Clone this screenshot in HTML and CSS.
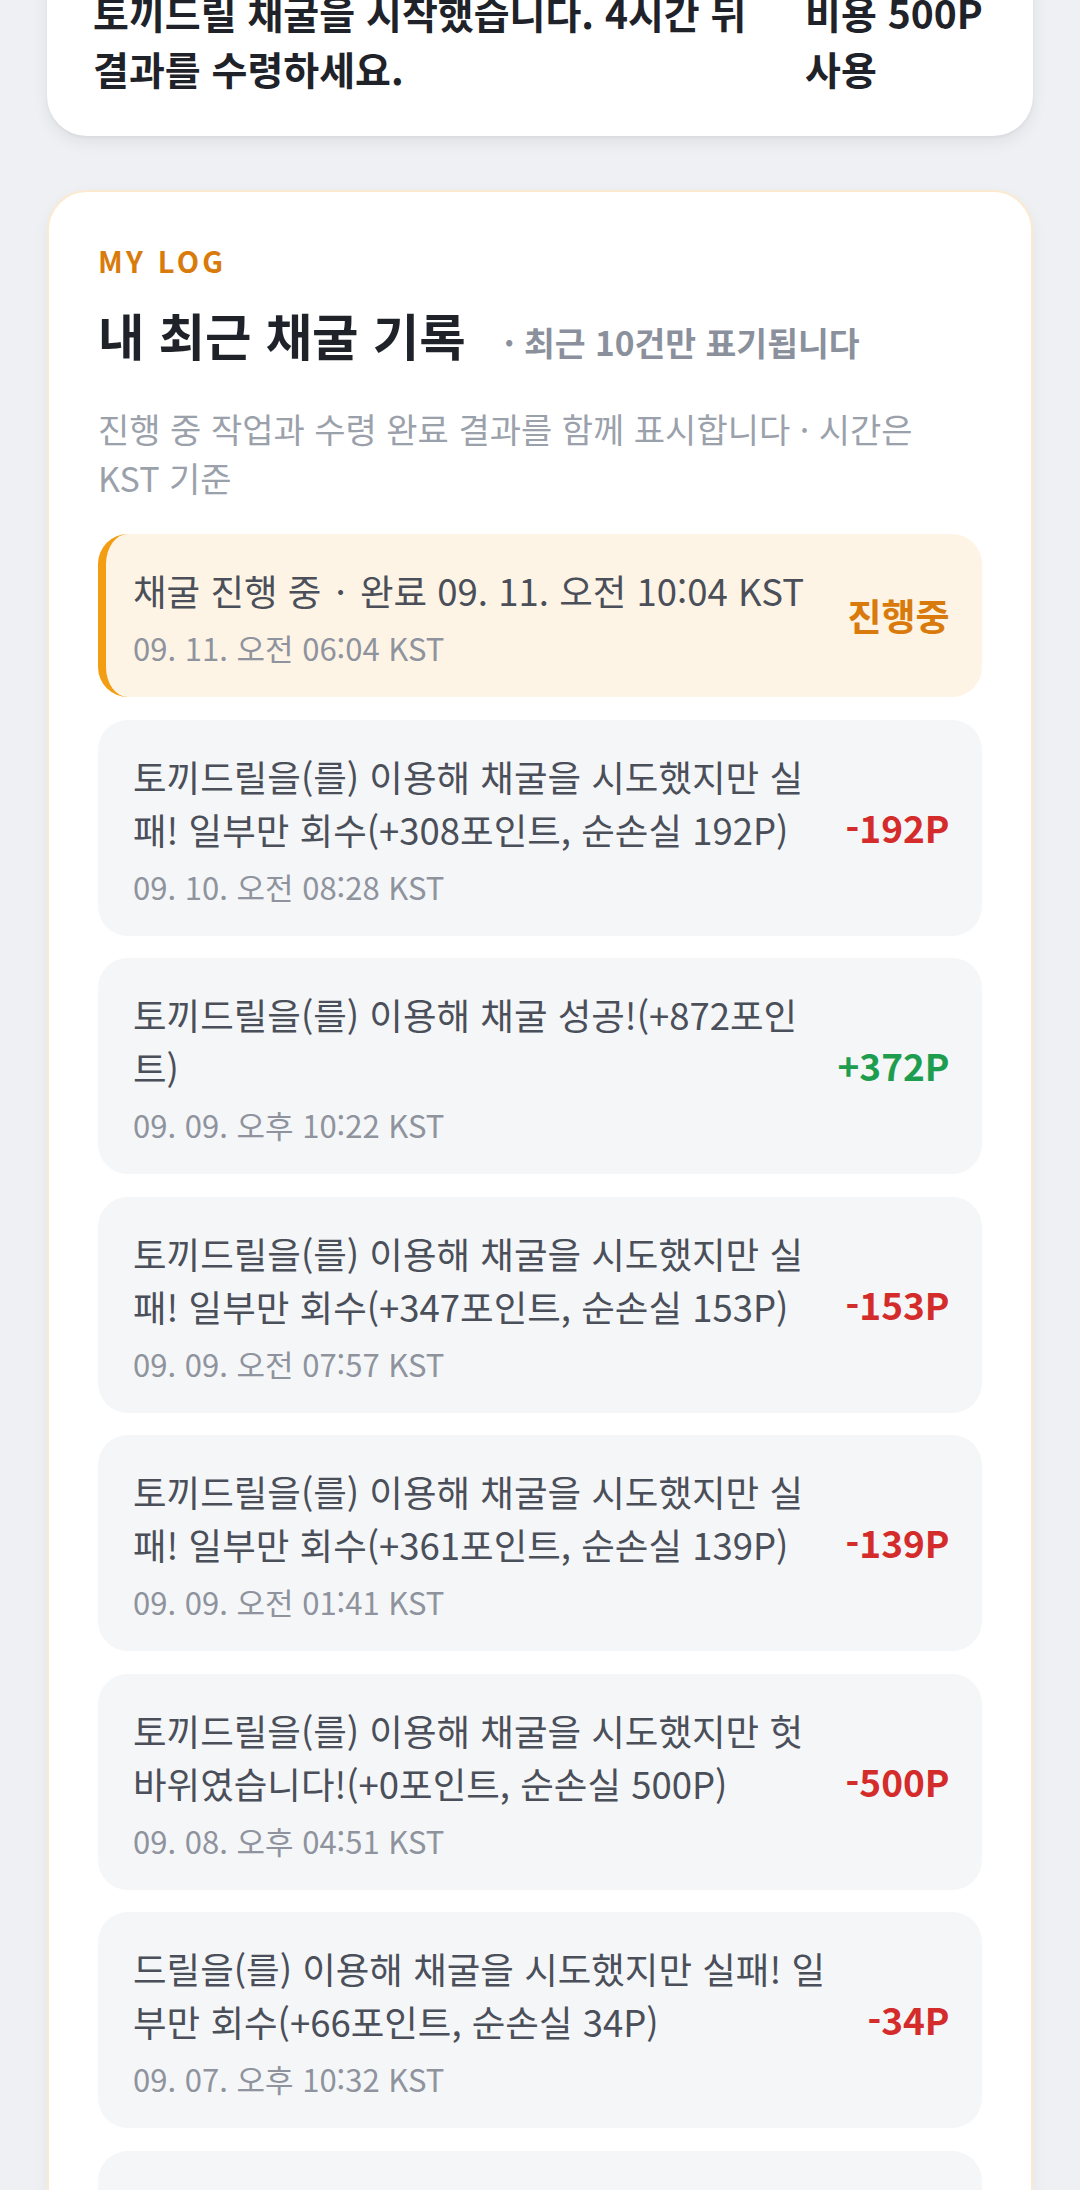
FILE: index.html
```html
<!DOCTYPE html>
<html lang="ko">
<head>
<meta charset="utf-8">
<title>내 최근 채굴 기록</title>
<link rel="stylesheet" href="styles.css">
</head>
<body>
<div class="page">
  <section class="card status-card">
    <p class="status-msg">토끼드릴 채굴을 시작했습니다. 4시간 뒤 결과를 수령하세요.</p>
    <p class="status-cost"><span class="nowrap">비용 500P</span> 사용</p>
  </section>

  <section class="card log-card">
    <div class="eyebrow">MY LOG</div>
    <div class="title-row">
      <h2 class="title">내 최근 채굴 기록</h2>
      <span class="note">· 최근 10건만 표기됩니다</span>
    </div>
    <p class="desc">진행 중 작업과 수령 완료 결과를 함께 표시합니다 · 시간은 KST 기준</p>

    <ul class="log-list">
      <li class="log-item active">
        <div class="log-body">
          <div class="log-text">채굴 진행 중 <span class="sep">·</span> 완료 09. 11. 오전 10:04 KST</div>
          <div class="log-date">09. 11. 오전 06:04 KST</div>
        </div>
        <div class="log-amount pending">진행중</div>
      </li>
      <li class="log-item">
        <div class="log-body">
          <div class="log-text">토끼드릴을(를) 이용해 채굴을 시도했지만 실패! 일부만 회수(+308포인트, 순손실 192P)</div>
          <div class="log-date">09. 10. 오전 08:28 KST</div>
        </div>
        <div class="log-amount minus">-192P</div>
      </li>
      <li class="log-item">
        <div class="log-body">
          <div class="log-text">토끼드릴을(를) 이용해 채굴 성공!(+872포인트)</div>
          <div class="log-date">09. 09. 오후 10:22 KST</div>
        </div>
        <div class="log-amount plus">+372P</div>
      </li>
      <li class="log-item">
        <div class="log-body">
          <div class="log-text">토끼드릴을(를) 이용해 채굴을 시도했지만 실패! 일부만 회수(+347포인트, 순손실 153P)</div>
          <div class="log-date">09. 09. 오전 07:57 KST</div>
        </div>
        <div class="log-amount minus">-153P</div>
      </li>
      <li class="log-item">
        <div class="log-body">
          <div class="log-text">토끼드릴을(를) 이용해 채굴을 시도했지만 실패! 일부만 회수(+361포인트, 순손실 139P)</div>
          <div class="log-date">09. 09. 오전 01:41 KST</div>
        </div>
        <div class="log-amount minus">-139P</div>
      </li>
      <li class="log-item">
        <div class="log-body">
          <div class="log-text">토끼드릴을(를) 이용해 채굴을 시도했지만 헛바위였습니다!(+0포인트, 순손실 500P)</div>
          <div class="log-date">09. 08. 오후 04:51 KST</div>
        </div>
        <div class="log-amount minus">-500P</div>
      </li>
      <li class="log-item">
        <div class="log-body">
          <div class="log-text">드릴을(를) 이용해 채굴을 시도했지만 실패! 일부만 회수(+66포인트, 순손실 34P)</div>
          <div class="log-date">09. 07. 오후 10:32 KST</div>
        </div>
        <div class="log-amount minus">-34P</div>
      </li>
      <li class="log-item">
        <div class="log-body">
          <div class="log-text">드릴을(를) 이용해 채굴을 했습니다. 일부만 회수(+80포인트, 순손실 20P)</div>
          <div class="log-date">09. 07. 오전 06:12 KST</div>
        </div>
        <div class="log-amount minus">-20P</div>
      </li>
    </ul>
  </section>
</div>
</body>
</html>
```

FILE: styles.css
```css
html, body {
  margin: 0;
  padding: 0;
  background: #eef0f3;
}

body {
  font-family: "Noto Sans CJK KR", "Noto Sans", sans-serif;
  color: #1f2329;
  height: 2190px;
  overflow: hidden;
}

.page {
  padding: 0 47px;
  display: flex;
  flex-direction: column;
  gap: 54px;
}

.card {
  background: #ffffff;
  border-radius: 40px;
}

/* status card (partially scrolled off) */
.status-card {
  margin-top: -56px;
  padding: 40px 48px 40px 46px;
  display: flex;
  gap: 46px;
  box-shadow: 0 6px 16px rgba(30, 40, 60, 0.07), 0 2px 3px rgba(30, 40, 60, 0.05);
}

.status-msg,
.status-cost {
  margin: 0;
  font-size: 39px;
  font-weight: 700;
  line-height: 56px;
  color: #1f2329;
}

.status-msg {
  flex: 1;
  min-width: 0;
}

.status-cost {
  width: 180px;
  flex-shrink: 0;
}

.nowrap {
  white-space: nowrap;
}

/* log card */
.log-card {
  border: 2px solid #fbead0;
  padding: 50px 49px 40px;
  box-shadow: 0 6px 16px rgba(30, 40, 60, 0.05);
}

.eyebrow {
  font-size: 29px;
  font-weight: 700;
  letter-spacing: 0.115em;
  line-height: 36px;
  color: #d97b0c;
}

.title-row {
  margin-top: 26px;
  display: flex;
  align-items: baseline;
}

.title {
  margin: 0;
  font-size: 50.5px;
  font-weight: 700;
  line-height: 60px;
  color: #1f2329;
}

.note {
  margin-left: 38px;
  font-size: 33.5px;
  font-weight: 600;
  color: #8b919c;
}

.desc {
  margin: 38px 0 0;
  max-width: 840px;
  font-size: 34px;
  line-height: 49px;
  color: #9ba1ab;
}

.log-list {
  list-style: none;
  margin: 32px 0 0;
  padding: 0;
  display: flex;
  flex-direction: column;
  gap: 22.5px;
}

.log-item {
  display: flex;
  align-items: center;
  gap: 24px;
  padding: 30px 32.5px 27px 35px;
  background: #f5f6f8;
  border-radius: 30px;
}

.log-item.active {
  background: #fef4e6;
  border-left: 8px solid #f29d12;
  padding-left: 27px;
}

.log-body {
  flex: 1;
  min-width: 0;
}

.log-text {
  font-size: 36.5px;
  line-height: 53px;
  color: #4a4f59;
}

.sep {
  margin: 0 4px;
}

.log-date {
  margin-top: 9px;
  font-size: 31px;
  line-height: 44px;
  color: #8e939d;
}

.log-amount {
  flex-shrink: 0;
  margin-bottom: 5px;
  font-size: 37px;
  font-weight: 700;
  line-height: 44px;
}

.log-amount.pending { color: #d97b0c; }
.log-amount.minus { color: #d42b2b; }
.log-amount.plus { color: #1f9d4f; }
```
